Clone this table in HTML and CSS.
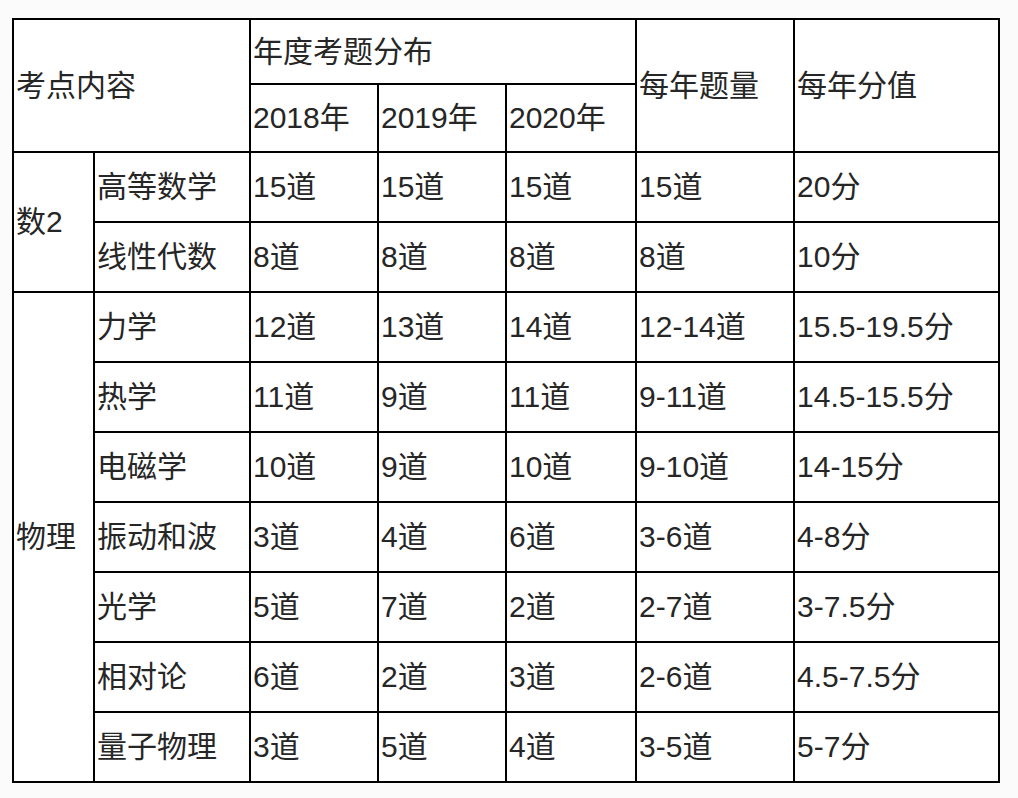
FILE: index.html
```html
<!DOCTYPE html>
<html lang="zh">
<head>
<meta charset="utf-8">
<title>考点内容</title>
<link rel="stylesheet" href="styles.css">
</head>
<body>
<table class="exam">
  <colgroup>
    <col class="c-group">
    <col class="c-topic">
    <col class="c-year">
    <col class="c-year">
    <col class="c-year3">
    <col class="c-count">
    <col class="c-score">
  </colgroup>
  <tbody>
    <tr class="head1">
      <td colspan="2" rowspan="2">考点内容</td>
      <td colspan="3">年度考题分布</td>
      <td rowspan="2">每年题量</td>
      <td rowspan="2">每年分值</td>
    </tr>
    <tr class="head2">
      <td>2018年</td>
      <td>2019年</td>
      <td>2020年</td>
    </tr>
    <tr>
      <td rowspan="2">数2</td>
      <td>高等数学</td>
      <td>15道</td><td>15道</td><td>15道</td><td>15道</td><td>20分</td>
    </tr>
    <tr>
      <td>线性代数</td>
      <td>8道</td><td>8道</td><td>8道</td><td>8道</td><td>10分</td>
    </tr>
    <tr>
      <td rowspan="7">物理</td>
      <td>力学</td>
      <td>12道</td><td>13道</td><td>14道</td><td>12-14道</td><td>15.5-19.5分</td>
    </tr>
    <tr>
      <td>热学</td>
      <td>11道</td><td>9道</td><td>11道</td><td>9-11道</td><td>14.5-15.5分</td>
    </tr>
    <tr>
      <td>电磁学</td>
      <td>10道</td><td>9道</td><td>10道</td><td>9-10道</td><td>14-15分</td>
    </tr>
    <tr>
      <td>振动和波</td>
      <td>3道</td><td>4道</td><td>6道</td><td>3-6道</td><td>4-8分</td>
    </tr>
    <tr>
      <td>光学</td>
      <td>5道</td><td>7道</td><td>2道</td><td>2-7道</td><td>3-7.5分</td>
    </tr>
    <tr>
      <td>相对论</td>
      <td>6道</td><td>2道</td><td>3道</td><td>2-6道</td><td>4.5-7.5分</td>
    </tr>
    <tr>
      <td>量子物理</td>
      <td>3道</td><td>5道</td><td>4道</td><td>3-5道</td><td>5-7分</td>
    </tr>
  </tbody>
</table>
</body>
</html>
```

FILE: styles.css
```css
html, body {
  margin: 0;
  background: #fbfbfb;
}

body {
  padding: 18px 0 0 12px;
  font-family: "Liberation Sans", "Noto Sans CJK SC", sans-serif;
  color: #262626;
}

.exam {
  table-layout: fixed;
  width: 988px;
  border-collapse: separate;
  border-spacing: 0;
  border-top: 2px solid #000;
  border-left: 2px solid #000;
  background: #fff;
  font-size: 30px;
}

.c-group { width: 81px; }
.c-topic { width: 156px; }
.c-year { width: 128px; }
.c-year3 { width: 130px; }
.c-count { width: 158px; }
.c-score { width: 205px; }

.exam td {
  box-sizing: border-box;
  border-right: 2px solid #000;
  border-bottom: 2px solid #000;
  padding: 0 0 0 2px;
  vertical-align: middle;
  white-space: nowrap;
  overflow: hidden;
  line-height: 1.2;
}

.exam tr { height: 70px; }
.exam tr.head1 { height: 65px; }
.exam tr.head2 { height: 68px; }
```
